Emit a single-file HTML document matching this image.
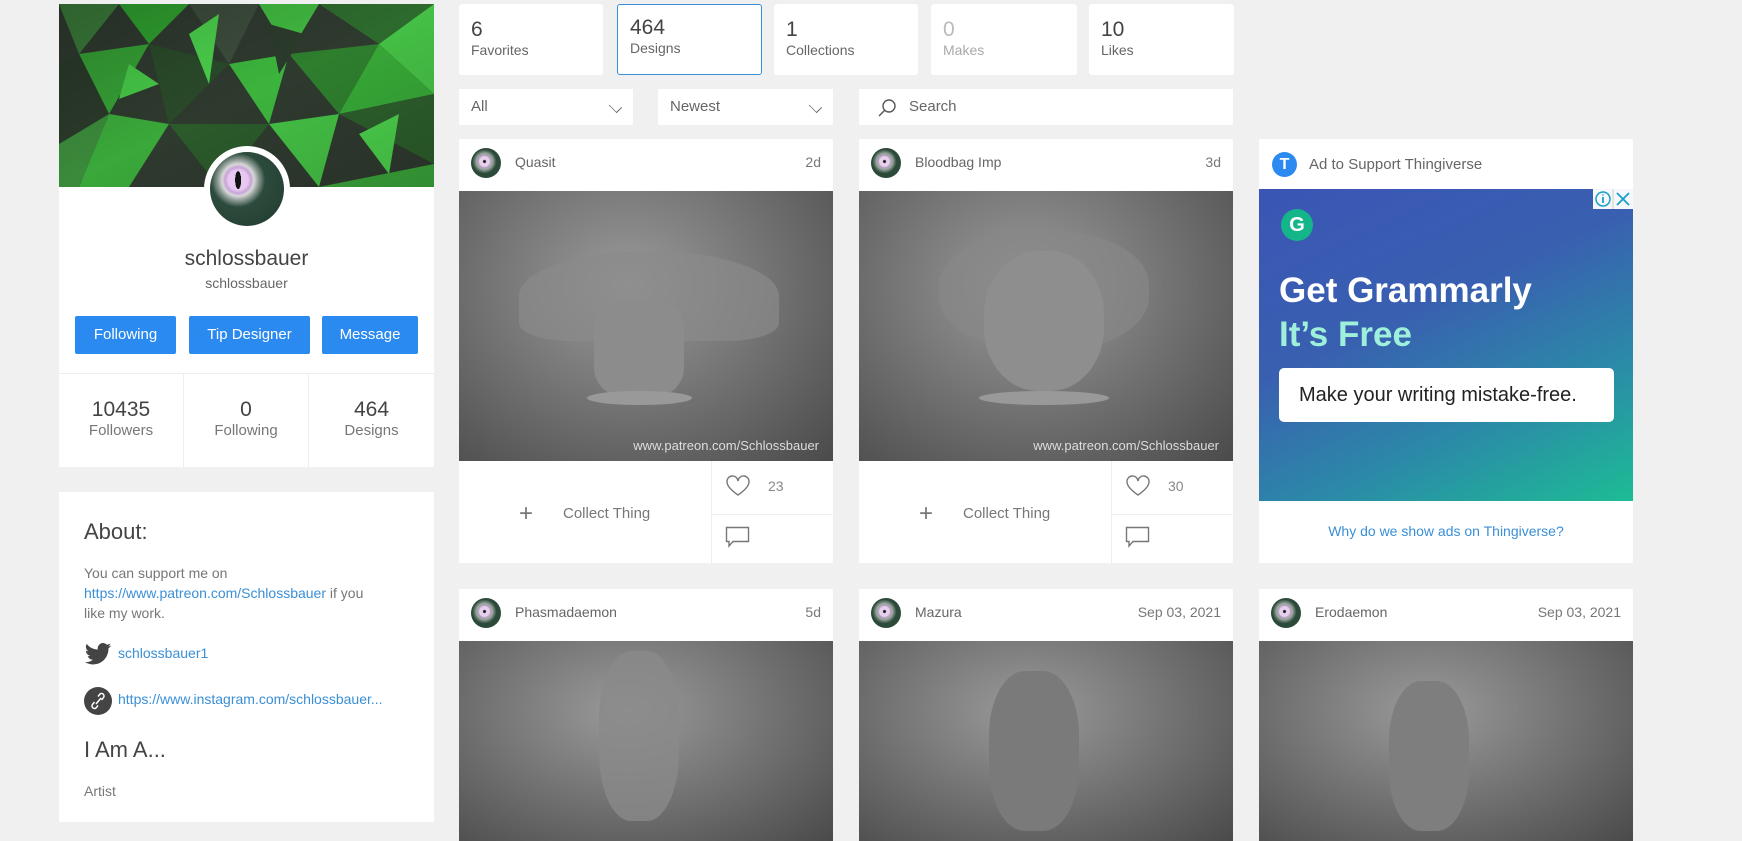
<!DOCTYPE html>
<html><head><meta charset="utf-8"><style>
*{box-sizing:border-box;margin:0;padding:0}
body{width:1742px;height:814px;overflow:hidden;background:#f0f0f0;font-family:"Liberation Sans",sans-serif;color:#555;position:relative}
.abs{position:absolute}
.card{position:absolute;background:#fff}
.btn{position:absolute;height:38px;background:#2b8aef;color:#fff;border-radius:2px;font-size:15px;line-height:38px;text-align:center}
.stat{position:absolute;height:94px;text-align:center;border-left:1px solid #eee}
.stat b{display:block;font-weight:normal;font-size:21px;color:#444;margin-top:25px}
.stat span{font-size:15px;color:#777}
.tab{position:absolute;top:4px;height:71px;background:#fff;border-radius:3px;padding:14px 12px}
.tab b{display:block;font-weight:normal;font-size:21px;color:#444}
.tab span{font-size:14px;color:#666}
.sel{position:absolute;top:89px;height:36px;background:#fff;font-size:15px;color:#666;line-height:36px;padding-left:12px}
.chev{position:absolute;right:12px;top:12px;width:11px;height:11px;border-right:1.5px solid #666;border-bottom:1.5px solid #666;transform:rotate(45deg) scale(1,.7)}
.hdr{height:52px;position:relative}
.av{position:absolute;left:12px;top:9px;width:30px;height:30px;border-radius:50%;background:radial-gradient(circle at 45% 45%,#111 0 1px,#e6d0ee 2px 5px,#b6a0c0 6px,#9aa7a0 8px,#2c4a3a 12px)}
.tt{position:absolute;left:56px;top:15px;font-size:14px;color:#666}
.dt{position:absolute;right:12px;top:15px;font-size:14px;color:#777}
.img{position:absolute;left:0;right:0;background:radial-gradient(ellipse at 45% 35%,#9a9a9a,#6e6e6e 55%,#4a4a4a)}
.ft{position:absolute;left:0;right:0;top:322px;height:102px}
</style></head><body>
<!-- profile card -->
<div class="card" style="left:59px;top:4px;width:375px;height:463px">
 <svg class="abs" style="left:0;top:0" width="375" height="183" viewBox="0 0 375 183">
  <rect width="375" height="183" fill="#2f3a2f"/>
  <g>
   <polygon points="0,0 60,0 20,50" fill="#3a7a3a"/>
   <polygon points="60,0 130,0 90,40" fill="#2fa02f"/>
   <polygon points="130,0 200,0 170,60" fill="#3c4c3c"/>
   <polygon points="200,0 260,0 230,50" fill="#40b840"/>
   <polygon points="260,0 375,0 320,40" fill="#2d6a2d"/>
   <polygon points="320,40 375,0 375,90" fill="#45c045"/>
   <polygon points="20,50 90,40 50,110" fill="#35a035"/>
   <polygon points="90,40 170,60 110,120" fill="#2a4a2a"/>
   <polygon points="170,60 230,50 210,120" fill="#3cb43c"/>
   <polygon points="230,50 320,40 280,110" fill="#2e7e2e"/>
   <polygon points="280,110 320,40 375,90" fill="#37a837"/>
   <polygon points="0,60 20,50 50,110 0,140" fill="#2a3a2a"/>
   <polygon points="50,110 110,120 70,183 20,183" fill="#3aa83a"/>
   <polygon points="110,120 210,120 160,183" fill="#2b5a2b"/>
   <polygon points="210,120 280,110 260,183" fill="#44c044"/>
   <polygon points="280,110 375,90 375,160" fill="#2c5e2c"/>
   <polygon points="260,183 375,160 375,183" fill="#3aa53a"/>
   <polygon points="0,140 50,110 20,183 0,183" fill="#3b8a3b"/>
   <polygon points="130,30 160,10 150,80" fill="#4bcf4b"/>
   <polygon points="300,130 340,110 330,170" fill="#4bcf4b"/>
   <polygon points="70,60 100,80 60,95" fill="#47c847"/>
   <polygon points="210,20 245,30 220,70" fill="#2b3b2b"/>
  </g>
  <rect width="375" height="183" fill="url(#sh)"/>
  <defs><linearGradient id="sh" x1="0" y1="0" x2="1" y2="1"><stop offset="0" stop-color="#000" stop-opacity=".2"/><stop offset=".5" stop-color="#000" stop-opacity="0"/><stop offset="1" stop-color="#000" stop-opacity=".15"/></linearGradient></defs>
 </svg>
 <div class="abs" style="left:145px;top:142px;width:86px;height:86px;border-radius:50%;background:#fff;padding:6px">
  <div style="width:74px;height:74px;border-radius:50%;background:radial-gradient(ellipse 3px 9px at 38% 38%,#111 99%,transparent),radial-gradient(circle at 38% 38%,#e6c8f0 0 10px,#c9a3d8 13px,#d8d8d8 16px,#93a09a 20px,#2d4b3d 27px,#1f3a2f)"></div>
 </div>
 <div class="abs" style="left:0;width:375px;top:243px;text-align:center;font-size:21px;color:#444">schlossbauer</div>
 <div class="abs" style="left:0;width:375px;top:271px;text-align:center;font-size:14px;color:#666">schlossbauer</div>
 <div class="btn" style="left:16px;width:101px;top:312px">Following</div>
 <div class="btn" style="left:130px;width:121px;top:312px">Tip Designer</div>
 <div class="btn" style="left:263px;width:96px;top:312px">Message</div>
 <div class="abs" style="left:0;top:369px;width:375px;border-top:1px solid #eee"></div>
 <div class="stat" style="left:0;width:124px;top:369px;border:0"><b>10435</b><span>Followers</span></div>
 <div class="stat" style="left:124px;width:125px;top:369px"><b>0</b><span>Following</span></div>
 <div class="stat" style="left:249px;width:126px;top:369px"><b>464</b><span>Designs</span></div>
</div>
<!-- about -->
<div class="card" style="left:59px;top:492px;width:375px;height:330px">
 <div style="position:absolute;left:25px;top:27px;font-size:22px;color:#444">About:</div>
 <div style="position:absolute;left:25px;top:71px;width:300px;font-size:14px;line-height:20px;color:#777">You can support me on <span style="color:#3a8fd6">https://www.patreon.com/Schlossbauer</span> if you like my work.</div>
 <svg style="position:absolute;left:25px;top:151px" width="28" height="22" viewBox="0 0 24 20"><path fill="#444" d="M24 2.4a10 10 0 0 1-2.8.8A5 5 0 0 0 23.3.4a10 10 0 0 1-3.1 1.2A4.9 4.9 0 0 0 11.8 6 14 14 0 0 1 1.7.9a4.9 4.9 0 0 0 1.5 6.6A4.9 4.9 0 0 1 1 6.9a4.9 4.9 0 0 0 3.9 4.8 4.9 4.9 0 0 1-2.2.1 4.9 4.9 0 0 0 4.6 3.4A9.9 9.9 0 0 1 0 17.3 14 14 0 0 0 7.5 19.5c9.1 0 14-7.5 14-14v-.6A10 10 0 0 0 24 2.4z"/></svg>
 <div style="position:absolute;left:59px;top:153px;font-size:14px;color:#3a8fd6">schlossbauer1</div>
 <svg style="position:absolute;left:25px;top:195px" width="28" height="28" viewBox="0 0 28 28"><circle cx="14" cy="14" r="14" fill="#444"/><path d="M12 17l5-6M10.5 15l-2 2.5a2.5 2.5 0 0 0 3.5 3.5l2-2.5M17.5 13l2-2.5a2.5 2.5 0 0 0-3.5-3.5l-2 2.5" stroke="#fff" stroke-width="1.5" fill="none"/></svg>
 <div style="position:absolute;left:59px;top:199px;font-size:14px;color:#3a8fd6">https://www.instagram.com/schlossbauer...</div>
 <div style="position:absolute;left:25px;top:245px;font-size:22px;color:#444">I Am A...</div>
 <div style="position:absolute;left:25px;top:291px;font-size:14px;color:#777">Artist</div>
</div>
<!-- tabs -->
<div class="tab" style="left:459px;width:144px"><b>6</b><span>Favorites</span></div>
<div class="tab" style="left:617px;width:145px;border:1px solid #3a8fd6;padding-top:11px"><b>464</b><span>Designs</span></div>
<div class="tab" style="left:774px;width:144px"><b>1</b><span>Collections</span></div>
<div class="tab" style="left:931px;width:146px"><b style="color:#bbb">0</b><span style="color:#aaa">Makes</span></div>
<div class="tab" style="left:1089px;width:145px"><b>10</b><span>Likes</span></div>
<div class="sel" style="left:459px;width:174px">All<i class="chev"></i></div>
<div class="sel" style="left:658px;width:175px">Newest<i class="chev"></i></div>
<div class="sel" style="left:859px;width:374px;padding-left:50px">Search
 <svg style="position:absolute;left:18px;top:9px" width="20" height="20" viewBox="0 0 20 20"><circle cx="12" cy="8" r="6" stroke="#555" stroke-width="1.4" fill="none"/><path d="M7.7 12.3L2 18" stroke="#555" stroke-width="1.4"/></svg></div>

<!-- cards row 1 -->
<div class="card" style="left:459px;top:139px;width:374px;height:424px">
 <div class="hdr"><i class="av"></i><span class="tt">Quasit</span><span class="dt">2d</span></div>
 <div class="img" style="top:52px;height:270px">
  <div class="abs" style="left:60px;top:60px;width:260px;height:90px;background:#8a8a8a;border-radius:50% 50% 20% 20%;opacity:.7"></div>
  <div class="abs" style="left:135px;top:110px;width:90px;height:95px;background:#8c8c8c;border-radius:30%"></div>
  <div class="abs" style="left:128px;top:200px;width:105px;height:14px;background:#999;border-radius:50%"></div>
  <div class="abs" style="right:14px;bottom:8px;font-size:13px;color:#ddd">www.patreon.com/Schlossbauer</div>
 </div>
 <div class="ft"><div class="abs" style="left:252px;top:0;bottom:0;border-left:1px solid #eee"></div><div class="abs" style="left:252px;right:0;top:53px;border-top:1px solid #eee"></div>
  <div class="abs" style="left:60px;top:39px;font-size:24px;color:#777">+</div><div class="abs" style="left:104px;top:44px;font-size:15px;color:#777">Collect Thing</div>
  <svg class="abs" style="left:266px;top:14px" width="26" height="22" viewBox="0 0 26 22"><path d="M13 20S2 13 2 7a5.5 5.5 0 0 1 11-1 5.5 5.5 0 0 1 11 1c0 6-11 13-11 13z" fill="none" stroke="#777" stroke-width="1.4"/></svg>
  <div class="abs" style="left:309px;top:17px;font-size:14px;color:#888">23</div>
  <svg class="abs" style="left:266px;top:65px" width="26" height="22" viewBox="0 0 26 22"><path d="M1.5 1.5h22v14H8l-4 4.5v-4.5H1.5z" fill="none" stroke="#777" stroke-width="1.4"/></svg>
 </div>
</div>
<div class="card" style="left:859px;top:139px;width:374px;height:424px">
 <div class="hdr"><i class="av"></i><span class="tt">Bloodbag Imp</span><span class="dt">3d</span></div>
 <div class="img" style="top:52px;height:270px">
  <div class="abs" style="left:80px;top:40px;width:210px;height:120px;background:#888;border-radius:45%;opacity:.7"></div>
  <div class="abs" style="left:125px;top:60px;width:120px;height:140px;background:#8e8e8e;border-radius:45%"></div>
  <div class="abs" style="left:120px;top:200px;width:130px;height:14px;background:#999;border-radius:50%"></div>
  <div class="abs" style="right:14px;bottom:8px;font-size:13px;color:#ddd">www.patreon.com/Schlossbauer</div>
 </div>
 <div class="ft"><div class="abs" style="left:252px;top:0;bottom:0;border-left:1px solid #eee"></div><div class="abs" style="left:252px;right:0;top:53px;border-top:1px solid #eee"></div>
  <div class="abs" style="left:60px;top:39px;font-size:24px;color:#777">+</div><div class="abs" style="left:104px;top:44px;font-size:15px;color:#777">Collect Thing</div>
  <svg class="abs" style="left:266px;top:14px" width="26" height="22" viewBox="0 0 26 22"><path d="M13 20S2 13 2 7a5.5 5.5 0 0 1 11-1 5.5 5.5 0 0 1 11 1c0 6-11 13-11 13z" fill="none" stroke="#777" stroke-width="1.4"/></svg>
  <div class="abs" style="left:309px;top:17px;font-size:14px;color:#888">30</div>
  <svg class="abs" style="left:266px;top:65px" width="26" height="22" viewBox="0 0 26 22"><path d="M1.5 1.5h22v14H8l-4 4.5v-4.5H1.5z" fill="none" stroke="#777" stroke-width="1.4"/></svg>
 </div>
</div>
<!-- ad -->
<div class="card" style="left:1259px;top:139px;width:374px;height:424px">
 <div class="abs" style="left:13px;top:13px;width:25px;height:25px;border-radius:50%;background:#2b8aef;color:#fff;font-weight:bold;font-size:16px;text-align:center;line-height:25px">T</div>
 <div class="abs" style="left:50px;top:17px;font-size:15px;color:#666">Ad to Support Thingiverse</div>
 <div class="abs" style="left:0;top:50px;width:374px;height:312px;background:linear-gradient(155deg,#3a55b5 0%,#3960b0 40%,#2b8aa8 70%,#1dbc95 100%)">
  <svg class="abs" style="right:0;top:0" width="40" height="20" viewBox="0 0 40 20"><rect width="40" height="20" fill="#fff" opacity=".95"/><circle cx="10" cy="10" r="7" fill="none" stroke="#19a0c8" stroke-width="1.5"/><path d="M10 8v6M10 5.5v1" stroke="#19a0c8" stroke-width="1.8"/><path d="M24 4l12 12M36 4L24 16" stroke="#19a0c8" stroke-width="1.8"/><path d="M20 0v20" stroke="#ccc"/></svg>
  <div class="abs" style="left:22px;top:20px;width:32px;height:32px;border-radius:50%;background:#15b58a;color:#fff;font-weight:bold;text-align:center;line-height:32px;font-size:20px">G</div>
  <div class="abs" style="left:20px;top:82px;font-size:35px;font-weight:bold;color:#fff">Get Grammarly</div>
  <div class="abs" style="left:20px;top:126px;font-size:35px;font-weight:bold;color:#9ef0da">It’s Free</div>
  <div class="abs" style="left:20px;top:179px;width:335px;height:54px;background:#fff;border-radius:5px;font-size:20px;color:#222;line-height:54px;padding-left:20px">Make your writing mistake-free.</div>
 </div>
 <div class="abs" style="left:0;width:374px;top:384px;text-align:center;font-size:14px;color:#3a8fd6">Why do we show ads on Thingiverse?</div>
</div>
<!-- row 2 -->
<div class="card" style="left:459px;top:589px;width:374px;height:240px">
 <div class="hdr"><i class="av"></i><span class="tt">Phasmadaemon</span><span class="dt">5d</span></div>
 <div class="img" style="top:52px;height:200px"><div class="abs" style="left:140px;top:10px;width:80px;height:170px;background:#8a8a8a;border-radius:40%;opacity:.8"></div></div>
</div>
<div class="card" style="left:859px;top:589px;width:374px;height:240px">
 <div class="hdr"><i class="av"></i><span class="tt">Mazura</span><span class="dt">Sep 03, 2021</span></div>
 <div class="img" style="top:52px;height:200px"><div class="abs" style="left:130px;top:30px;width:90px;height:160px;background:#7a7a7a;border-radius:40%"></div></div>
</div>
<div class="card" style="left:1259px;top:589px;width:374px;height:240px">
 <div class="hdr"><i class="av"></i><span class="tt">Erodaemon</span><span class="dt">Sep 03, 2021</span></div>
 <div class="img" style="top:52px;height:200px"><div class="abs" style="left:130px;top:40px;width:80px;height:150px;background:#7e7e7e;border-radius:40%"></div></div>
</div>
</body></html>
